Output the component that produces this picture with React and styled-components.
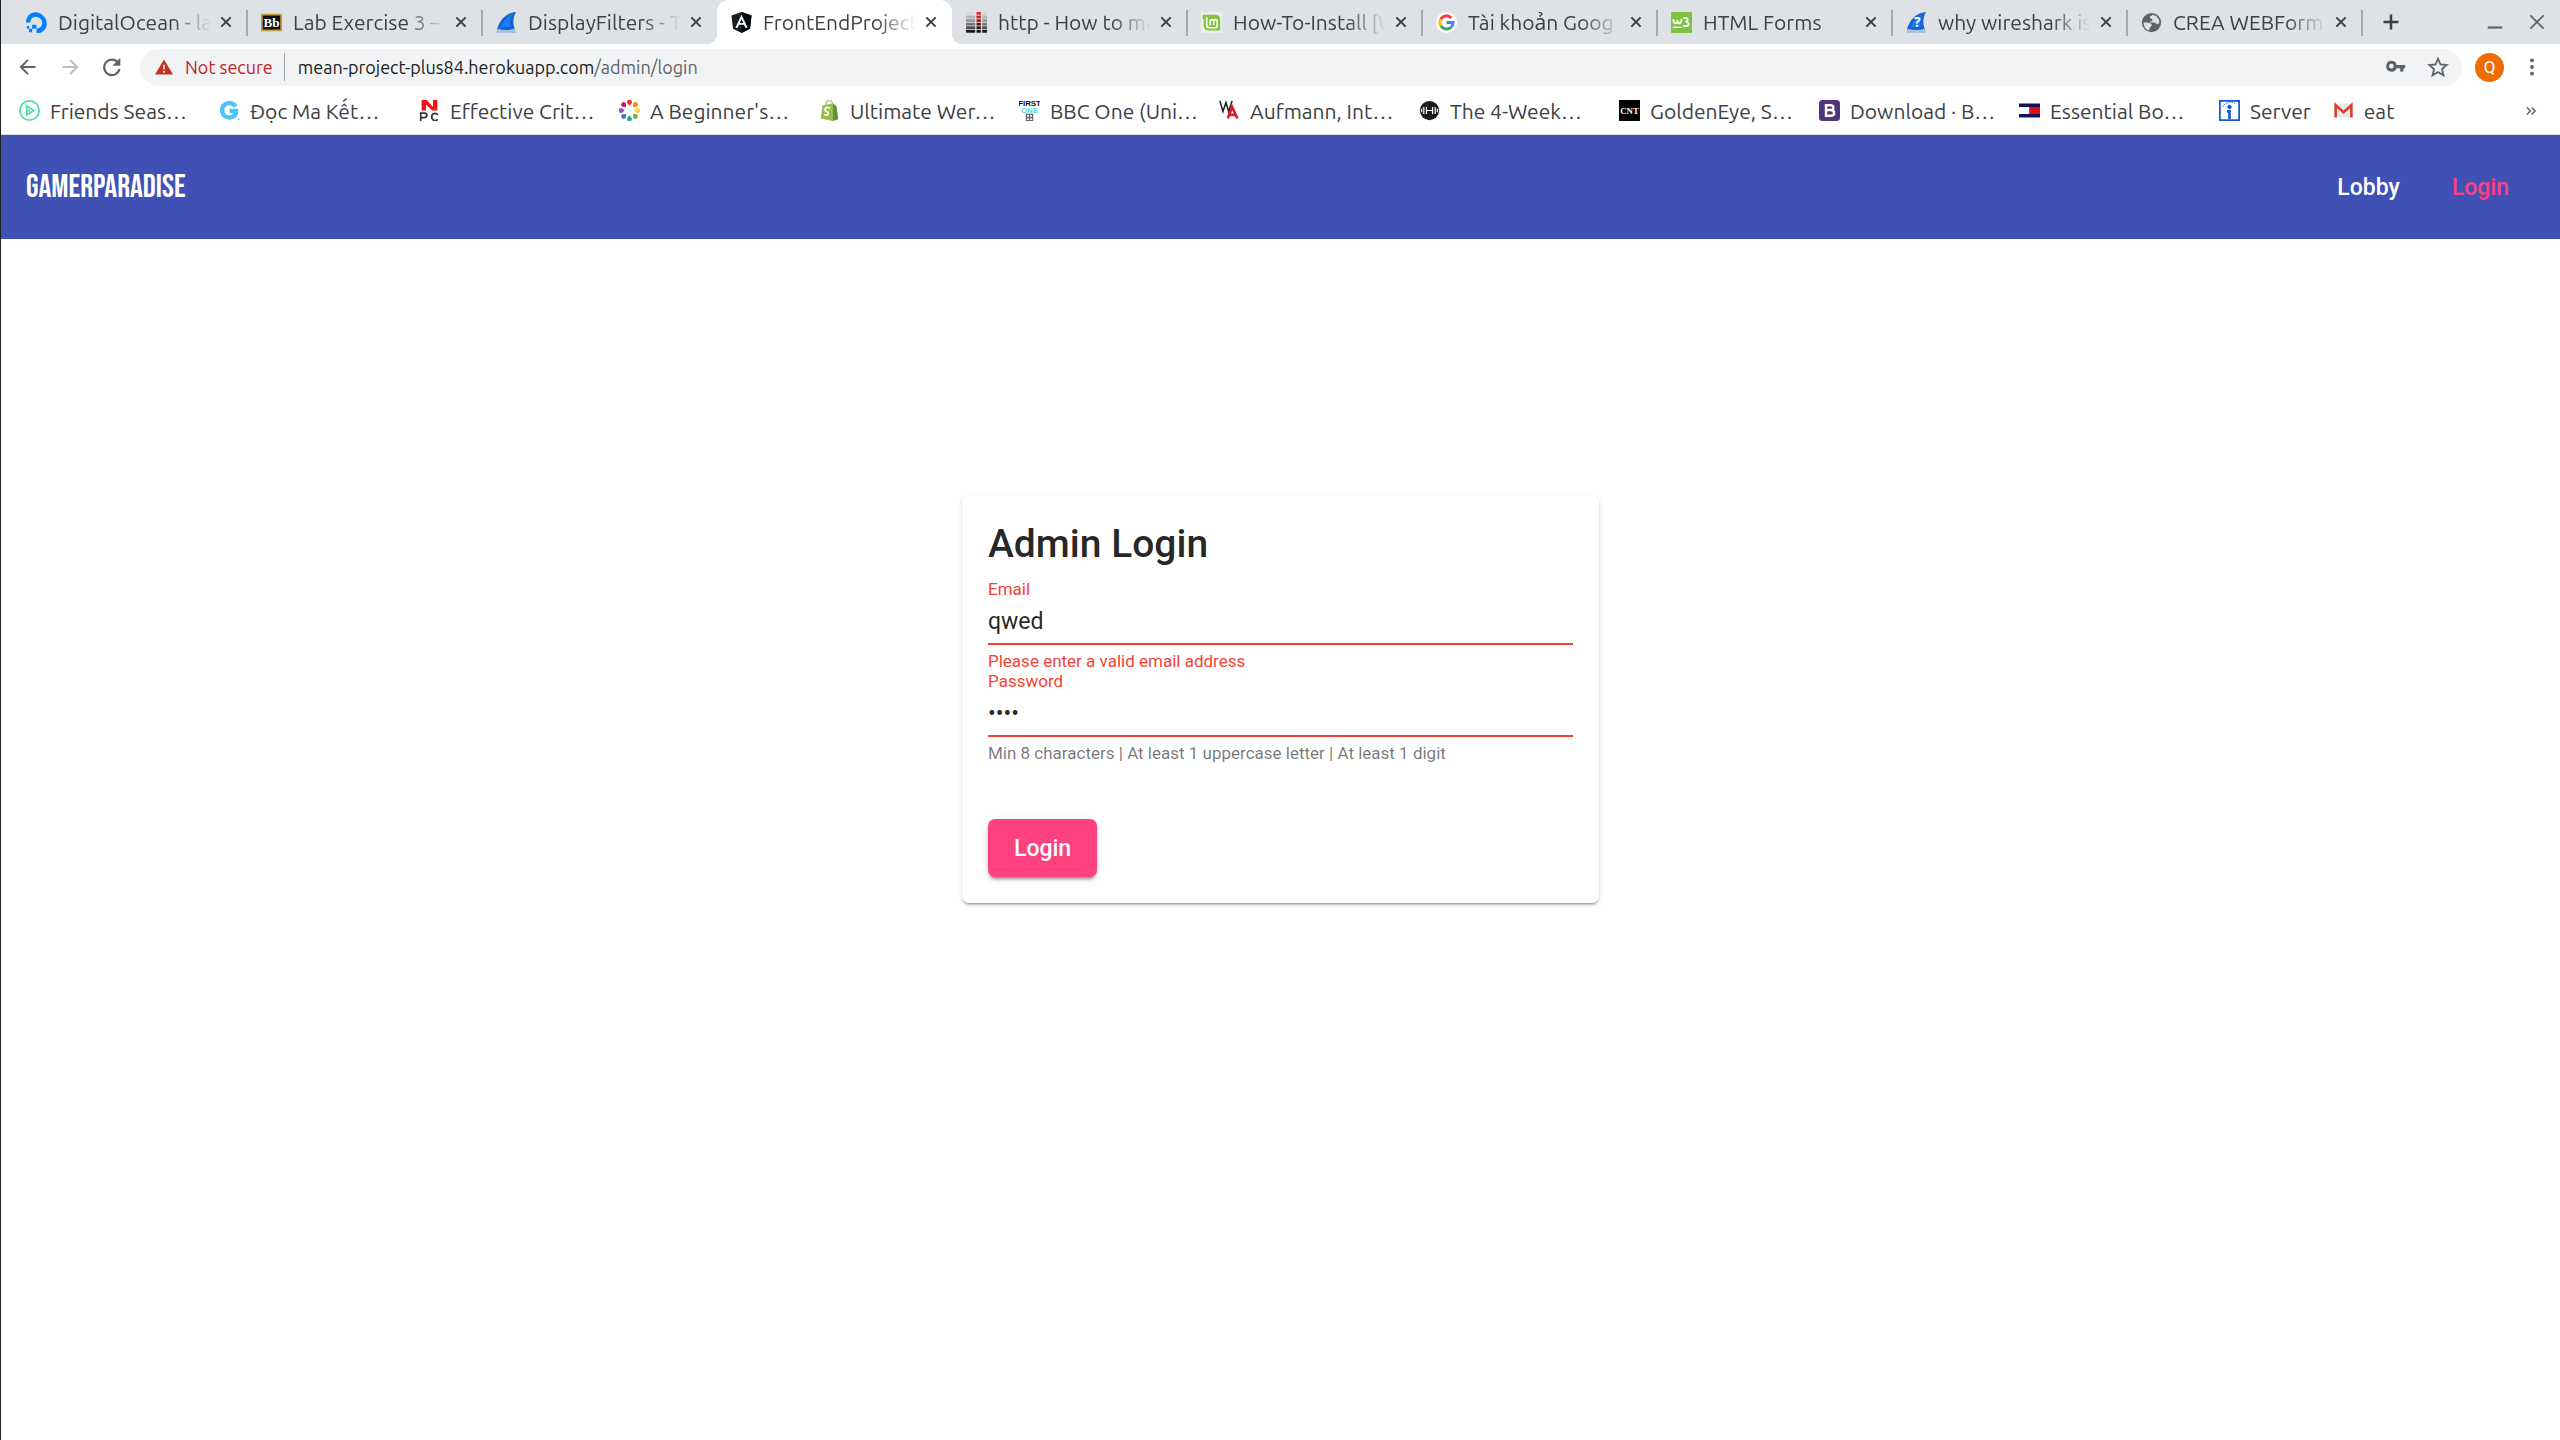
import React, { useState } from "react";
import styled, { createGlobalStyle, css } from "styled-components";

const GlobalStyle = createGlobalStyle`
  *, *::before, *::after { box-sizing: border-box; }
  body { margin: 0; background: #fff; font-family: Roboto, "Liberation Sans", sans-serif; }
  button, input { font: inherit; color: inherit; margin: 0; padding: 0; border: 0; background: none; outline: none; }
  button { cursor: pointer; }
  a { color: inherit; text-decoration: none; }
  svg { display: block; flex: none; }
`;

const Shell = styled.div`
  min-height: 100vh;
  display: flex;
  flex-direction: column;
  border-left: 1px solid #1f2022;
`;

const Chrome = styled.header`
  font-family: Ubuntu, "Noto Sans", "Open Sans", sans-serif;
  font-size: 21px;
  color: #3c4043;
  border-bottom: 1px solid #d5d7da;
`;

const TabStrip = styled.div`
  display: flex;
  height: 44px;
  padding-left: 11px;
  background: #dee1e6;
`;

const Tab = styled.div`
  position: relative;
  flex: 0 1 235px;
  min-width: 0;
  display: flex;
  align-items: center;
  gap: 11px;
  padding: 0 11px 0 14px;
  ${(p) => p.$divided && css`
    &::after {
      content: "";
      position: absolute;
      right: -1px;
      top: 10px;
      width: 2px;
      height: 26px;
      background: #a5a8ad;
    }
  `}
  ${(p) => p.$active && css`
    background: #fff;
    border-radius: 12px 12px 0 0;
    &::before, &::after {
      content: "";
      position: absolute;
      bottom: 0;
      width: 10px;
      height: 10px;
    }
    &::before { right: 100%; background: radial-gradient(circle at 0 0, transparent 10px, #fff 10px); }
    &::after { left: 100%; background: radial-gradient(circle at 100% 0, transparent 10px, #fff 10px); }
  `}
`;

const TabTitle = styled.button`
  flex: 1;
  min-width: 0;
  overflow: hidden;
  white-space: nowrap;
  text-align: left;
  line-height: 28px;
  mask-image: linear-gradient(to right, #000 calc(100% - 40px), transparent);
`;

const IconButton = styled.button`
  flex: none;
  display: grid;
  place-items: center;
  width: ${(p) => p.$size || 42}px;
  height: ${(p) => p.$size || 42}px;
  color: ${(p) => p.$color || "#5f6368"};
`;

const TabClose = styled(IconButton)`
  width: 20px;
  height: 20px;
  margin-left: -6px;
  color: #3c4043;
`;

const StripTools = styled.div`
  flex: 1;
  display: flex;
  align-items: center;
  padding: 0 2px 0 8px;
`;

const Spacer = styled.span`
  flex: 1;
`;

const Toolbar = styled.div`
  display: flex;
  align-items: center;
  height: 46px;
  padding: 0 7px 0 6px;
`;

const Omnibox = styled.div`
  flex: 1;
  display: flex;
  align-items: center;
  height: 37px;
  margin-left: 7px;
  padding: 0 3px 0 15px;
  border-radius: 19px;
  background: #f1f3f4;
  font-size: 18px;
`;

const SecurityChip = styled.button`
  display: flex;
  align-items: center;
  gap: 12px;
  color: #c5221f;
`;

const Divider = styled.span`
  width: 1px;
  height: 28px;
  margin: 0 13px 0 11px;
  background: #9a9da1;
`;

const Host = styled.label`
  color: #202124;
`;

const PathInput = styled.input`
  flex: 1;
  min-width: 0;
  color: #5f6368;
`;

const Avatar = styled.button`
  width: 29px;
  height: 29px;
  margin: 0 7px 0 13px;
  border-radius: 50%;
  background: #ef6c00;
  color: #fff;
  font-family: Roboto, sans-serif;
  font-size: 17px;
  line-height: 29px;
`;

const BookmarkBar = styled.nav`
  display: flex;
  align-items: center;
  height: 44px;
  padding: 0 8px 3px 18px;
`;

const Bookmark = styled.a`
  flex: 0 1 ${(p) => (p.$short ? "auto" : "200px")};
  min-width: 0;
  display: flex;
  align-items: center;
  gap: 10px;
  padding-right: ${(p) => (p.$short ? 22 : 0)}px;
  line-height: 28px;
  white-space: nowrap;
`;

const AppBar = styled.div`
  display: flex;
  align-items: center;
  justify-content: space-between;
  height: 104px;
  padding: 0 51px 0 25px;
  background: #3f51b5;
  color: #fff;
`;

const Brand = styled.a`
  font-family: "Bebas Neue", "Roboto Condensed", "Liberation Sans Narrow", "Liberation Sans", sans-serif;
  font-size: 32px;
  font-weight: 400;
`;

const AppNav = styled.nav`
  display: flex;
  gap: 52px;
  font-size: 23px;
  font-weight: 500;
`;

const NavLink = styled.a`
  color: ${(p) => (p.$active ? "#ff4081" : "#fff")};
`;

const Main = styled.main`
  flex: 1;
  padding: 256px 26px 26px;
`;

const Card = styled.form`
  max-width: 637px;
  margin: 0 auto;
  padding: 26px;
  border-radius: 7px;
  background: #fff;
  color: rgba(0, 0, 0, 0.87);
  box-shadow: 0 3px 2px -2px rgba(0, 0, 0, 0.2), 0 2px 2px 0 rgba(0, 0, 0, 0.14), 0 2px 5px 0 rgba(0, 0, 0, 0.12);
`;

const CardTitle = styled.h1`
  margin: 0 0 12px;
  font-size: 39px;
  line-height: 46px;
  font-weight: 500;
`;

const Field = styled.div`
  display: flex;
  flex-direction: column;
  font-size: 17px;
  line-height: 20px;
`;

const FieldLabel = styled.label`
  color: #f44336;
`;

const FieldInput = styled.input`
  height: 46px;
  padding: 8px 0;
  border-bottom: 2px solid #f44336;
  font-size: 23px;
  line-height: 28px;
`;

const FieldNote = styled.p`
  margin: 6px 0 0;
  color: ${(p) => (p.$error ? "#f44336" : "rgba(0, 0, 0, 0.54)")};
`;

const SubmitButton = styled.button`
  height: 58px;
  margin-top: 56px;
  padding: 0 26px;
  border-radius: 7px;
  background: #ff4081;
  color: #fff;
  font-size: 23px;
  font-weight: 500;
  box-shadow: 0 5px 2px -3px rgba(0, 0, 0, 0.2), 0 3px 3px 0 rgba(0, 0, 0, 0.14), 0 2px 8px 0 rgba(0, 0, 0, 0.12);
`;

const Icon = ({ size = 21, box = 24, children, ...rest }) => (
  <svg width={size} height={size} viewBox={`0 0 ${box} ${box}`} fill="none" aria-hidden="true" {...rest}>
    {children}
  </svg>
);

const Stroke = ({ d, size = 24, width = 2 }) => (
  <Icon size={size} stroke="currentColor" strokeWidth={width}>
    <path d={d} />
  </Icon>
);

const Fin = ({ mark }) => (
  <Icon>
    <path d="M1 21C3 11 10 1 23 0c-4 6-4 14-1 21z" fill="#1262d8" />
    <path d="M6 17C8 10 13 4 20 2c-4 5-5 10-3 15z" fill="#1b7bea" />
    <path d="M0 24l2-5c7 2 13 2 19 0l2 5z" fill="#a9bfdc" />
    {mark && <text x="13" y="17" fontSize="16" fontWeight="700" textAnchor="middle" fill="#fff" fontFamily="Open Sans">?</text>}
  </Icon>
);

const OceanIcon = () => (
  <Icon>
    <path d="M12 24v-5c5 0 8-5 6-9-2-5-9-6-12-2-1 1-1 3-1 4H0C0 4 7-2 15 1c10 4 12 17 3 22-2 1-4 1-6 1z" fill="#0080ff" />
    <path d="M7 14.500h5V19H7zM3.500 19H7v4H3.500zM1 16h2.500v3H1z" fill="#0080ff" />
  </Icon>
);

const BlackboardIcon = () => (
  <Icon>
    <rect x="1" y="3" width="22" height="18" fill="#111" stroke="#c29b3c" strokeWidth="2" />
    <text x="12" y="17.500" fontSize="15" fontWeight="700" textAnchor="middle" fill="#fff" fontFamily="Liberation Serif, serif">Bb</text>
  </Icon>
);

const AngularIcon = () => (
  <Icon>
    <path d="M12 0l11.500 4-1.800 15L12 24 2.300 19 .5 4z" fill="#1b1f24" />
    <path d="M12 0l11.500 4-1.800 15L12 24z" fill="#05080b" />
    <path d="M12 3L5 18h2.700l1.400-3.500h5.800l1.400 3.500H19zm0 5l2 4.500h-4z" fill="#fff" />
  </Icon>
);

const BARS = ["#d9d9d9", "#b5b5b5", "#999", "#777", "#4a4a4a", "#1b1b1b"];
const REDS = ["#f3282c", "#c91f25", "#a51b20", "#6f1318", "#3c1013", "#1b1b1b"];
const ExchangeIcon = () => (
  <Icon>
    {BARS.map((c, i) => (
      <g key={c}>
        <rect x="0" y={i * 4.1} width="10.500" height="3.200" fill={c} />
        <rect x="12" y={i * 4.1} width="5" height="3.200" fill={REDS[i]} />
        <rect x="18.500" y={i * 4.1} width="5.500" height="3.200" fill={c} />
      </g>
    ))}
  </Icon>
);

const MintIcon = () => (
  <Icon>
    <rect width="24" height="24" fill="#eee" />
    <path d="M2 3h14c4 0 6 2 6 6v12H9c-4 0-6-2-6-6V8H2z" fill="#86c440" />
    <path d="M6.500 6v8c0 3 1 4 3 4h6c2 0 3-1 3-3v-4c0-3-4-3-4 0v4m0-4c0-3-4-3-4 0v4" stroke="#fff" strokeWidth="1.800" />
  </Icon>
);

const GoogleIcon = () => (
  <Icon>
    <circle cx="12" cy="12" r="12" fill="#fff" />
    <g strokeWidth="3.400">
      <path d="M17.500 6.800A7.500 7.500 0 0 0 5.500 8.200" stroke="#ea4335" />
      <path d="M5.500 8.200a7.500 7.500 0 0 0 0 7.600" stroke="#fbbc05" />
      <path d="M5.500 15.800a7.500 7.500 0 0 0 11.500 1.800" stroke="#34a853" />
      <path d="M12 12h7.500a7.500 7.500 0 0 1-2.500 5.600" stroke="#4285f4" />
    </g>
  </Icon>
);

const SchoolsIcon = () => (
  <Icon>
    <rect width="24" height="24" rx="1" fill="#80c342" />
    <path d="M3 8c-1 6 4 7 4.500 1C7 15 12 14 12 8M14 7.500c5-3 7.500 2.500 2.500 3.500 6 .5 4.500 7-2.500 4.500" stroke="#fff" strokeWidth="2" />
    <path d="M2 17.500h11" stroke="#fff" strokeWidth="1.500" />
  </Icon>
);

const GlobeIcon = () => (
  <Icon>
    <circle cx="12" cy="12" r="11" fill="#5f6368" />
    <path d="M13 3c-1 2-3 1-3 3s3 1 3 3-3 1-3 3h5c2 0 2 2 4 2l2-2c0-5-3-8-8-9z" fill="#dee1e6" />
    <path d="M3 12c3 0 8 0 9 2s-1 3-2 4l-1 3c-4-1-6-5-6-9z" fill="#dee1e6" />
  </Icon>
);

const PlayRing = () => (
  <Icon stroke="#4de2a2" strokeWidth="2">
    <circle cx="12" cy="12" r="11" />
    <path d="M9 7l8 5-8 5z" />
    <path d="M11.500 10.500v3" />
  </Icon>
);

const BlueG = () => (
  <Icon>
    <path d="M19 7.500A8.300 8.300 0 1 0 19.500 15v-2.500H12" stroke="#4fc3f7" strokeWidth="5" />
    <circle cx="22.500" cy="22" r="1" fill="#4fc3f7" />
  </Icon>
);

const NpcIcon = () => (
  <Icon>
    <path d="M3 0h6l7 8V0h5v12h-6L8 5v7H3z" fill="#f01414" />
    <path d="M2 24V15h4c4 0 4 5 0 5H2M21.500 17c-2-3-7-2-7 2.500s5 5 7 2.500" stroke="#333" strokeWidth="2" />
  </Icon>
);

const DOTS = ["#e53935", "#fb8c00", "#fdd835", "#7cb342", "#26a69a", "#3f78c9", "#7e57c2", "#c2185b"];
const DotRing = () => (
  <Icon>
    {DOTS.map((c, i) => (
      <path key={c} d="M10 0h4l1 3-3 3.500L9 3z" fill={c} transform={`rotate(${i * 45} 12 12)`} />
    ))}
  </Icon>
);

const ShopifyIcon = () => (
  <Icon>
    <path d="M8 6c0-7 7-8 8 0" stroke="#b9c7a5" strokeWidth="2" />
    <path d="M4 6l12-2v20L2 21z" fill="#95bf47" />
    <path d="M16 4l4 3 2 15-6 2z" fill="#5e8e3e" />
    <path d="M13 9c-7-2-7 3-4 4.500s2 5-3 3" stroke="#fff" strokeWidth="2" />
  </Icon>
);

const FirstOneIcon = () => (
  <Icon>
    <g fontFamily="Liberation Sans, sans-serif" fontWeight="700" textAnchor="middle">
      <text x="12" y="7" fontSize="9" fill="#111">FIRST</text>
      <text x="12" y="14.500" fontSize="9" fill="#58dbe8">ONE</text>
    </g>
    <path d="M8.500 16.500h7v7h-7zM8.500 20h7M12 16.500v7" stroke="#666" strokeWidth="1.500" />
  </Icon>
);

const WaIcon = () => (
  <Icon>
    <path d="M1 1l3.500 12L8 3l3 10 4-12" stroke="#222" strokeWidth="1.800" />
    <path d="M10 21l5-13 6 13M12 17h7" stroke="#e01b24" strokeWidth="3" />
  </Icon>
);

const DumbbellIcon = () => (
  <Icon>
    <circle cx="12" cy="12" r="11" fill="#1b1b1b" />
    <path d="M9 12h6M8.500 8v8M15.500 8v8M5.500 8v8M18.500 8v8M3 10v4M21 10v4" stroke="#fff" strokeWidth="1.400" />
  </Icon>
);

const CntIcon = () => (
  <Icon>
    <rect width="24" height="24" fill="#000" />
    <text x="12" y="15.500" fontSize="10" fontWeight="700" textAnchor="middle" fill="#fff" fontFamily="Liberation Serif, serif">CNT</text>
  </Icon>
);

const BootstrapIcon = () => (
  <Icon>
    <rect width="24" height="24" rx="4" fill="#4f3579" />
    <path d="M8 6h5c4.500 0 4.500 5.500 0 5.500H8h5.500c5 0 5 6.500 0 6.500H8z" stroke="#fff" strokeWidth="2.800" />
  </Icon>
);

const TommyIcon = () => (
  <Icon>
    <path d="M0 4h24v16H0z" fill="#12125c" />
    <path d="M0 8h12v8H0z" fill="#fff" />
    <path d="M12 8h12v8H12z" fill="#e30b17" />
  </Icon>
);

const InfoBox = () => (
  <Icon stroke="#1558e0">
    <rect x="1" y="1" width="22" height="22" fill="#fff" strokeWidth="2" />
    <path d="M4 8c3-6 11-7 14-4" strokeWidth="1" strokeDasharray="2 1" />
    <circle cx="12" cy="8" r="2" fill="#1558e0" />
    <path d="M9 13h3v9" strokeWidth="3" />
  </Icon>
);

const GmailIcon = () => (
  <Icon>
    <path d="M2 4h20v16H2z" fill="#e9e9e9" />
    <path d="M3 20V6l9 8 9-8v14" stroke="#d93f35" strokeWidth="3" />
  </Icon>
);

const TABS = [
  { title: "DigitalOcean - la", icon: <OceanIcon /> },
  { title: "Lab Exercise 3 –", icon: <BlackboardIcon /> },
  { title: "DisplayFilters - T", icon: <Fin /> },
  { title: "FrontEndProject", icon: <AngularIcon />, active: true },
  { title: "http - How to ma", icon: <ExchangeIcon /> },
  { title: "How-To-Install [W", icon: <MintIcon /> },
  { title: "Tài khoản Goog", icon: <GoogleIcon /> },
  { title: "HTML Forms", icon: <SchoolsIcon /> },
  { title: "why wireshark is", icon: <Fin mark /> },
  { title: "CREA WEBForm", icon: <GlobeIcon /> },
];

const BOOKMARKS = [
  { title: "Friends Seas…", icon: <PlayRing /> },
  { title: "Đọc Ma Kết…", icon: <BlueG /> },
  { title: "Effective Crit…", icon: <NpcIcon /> },
  { title: "A Beginner's…", icon: <DotRing /> },
  { title: "Ultimate Wer…", icon: <ShopifyIcon /> },
  { title: "BBC One (Uni…", icon: <FirstOneIcon /> },
  { title: "Aufmann, Int…", icon: <WaIcon /> },
  { title: "The 4-Week…", icon: <DumbbellIcon /> },
  { title: "GoldenEye, S…", icon: <CntIcon /> },
  { title: "Download · B…", icon: <BootstrapIcon /> },
  { title: "Essential Bo…", icon: <TommyIcon /> },
  { title: "Server", icon: <InfoBox />, short: true },
  { title: "eat", icon: <GmailIcon />, short: true },
];

function BrowserChrome() {
  const [path, setPath] = useState("/admin/login");
  return (
    <Chrome>
      <TabStrip>
        {TABS.map((tab, i) => (
          <Tab key={tab.title} $active={tab.active} $divided={!tab.active && !TABS[i + 1]?.active}>
            {tab.icon}
            <TabTitle type="button">{tab.title}</TabTitle>
            <TabClose type="button" aria-label="Close tab">
              <Stroke d="M5 5l14 14M19 5L5 19" size={16} width={3} />
            </TabClose>
          </Tab>
        ))}
        <StripTools>
          <IconButton type="button" aria-label="New tab" $color="#3c4043">
            <Stroke d="M12 3v18M3 12h18" size={20} width={3} />
          </IconButton>
          <Spacer />
          <IconButton type="button" aria-label="Minimize">
            <Stroke d="M4 18h16" size={22} width={2.4} />
          </IconButton>
          <IconButton type="button" aria-label="Close window">
            <Stroke d="M4 4l16 16M20 4L4 20" size={20} />
          </IconButton>
        </StripTools>
      </TabStrip>
      <Toolbar>
        <IconButton type="button" aria-label="Back">
          <Stroke d="M21 12H4M12 3.500L3.500 12l8.500 8.500" size={20} width={2.4} />
        </IconButton>
        <IconButton type="button" aria-label="Forward" $color="#babcbe">
          <Stroke d="M3 12h17M12 3.500l8.500 8.500-8.500 8.500" size={20} width={2.4} />
        </IconButton>
        <IconButton type="button" aria-label="Reload">
          <Icon size={20}>
            <path d="M19.500 7A9.300 9.300 0 1 0 21 14.500" stroke="currentColor" strokeWidth="2.600" />
            <path d="M22 1v9.500h-9.500z" fill="currentColor" />
          </Icon>
        </IconButton>
        <Omnibox>
          <SecurityChip type="button">
            <Icon size={18}>
              <path d="M12 2l12 20H0z" fill="#c5301f" />
              <path d="M12 9v6M12 17v2.500" stroke="#f1f3f4" strokeWidth="2.200" />
            </Icon>
            Not secure
          </SecurityChip>
          <Divider />
          <Host htmlFor="address">mean-project-plus84.herokuapp.com</Host>
          <PathInput id="address" value={path} onChange={(e) => setPath(e.target.value)} />
          <IconButton type="button" aria-label="Saved passwords">
            <Icon size={20}>
              <path fillRule="evenodd" d="M6.500 4.500a6.500 6.500 0 1 0 6.200 9H17v4h4v-4h2v-4H12.700a6.500 6.500 0 0 0-6.200-5zm0 3.700a2.800 2.800 0 1 1 0 5.600 2.800 2.800 0 0 1 0-5.600z" fill="currentColor" />
            </Icon>
          </IconButton>
          <IconButton type="button" aria-label="Bookmark this page">
            <Stroke d="M12 3l2.700 6.200 6.800.6-5.200 4.500 1.600 6.700-5.900-3.600L6.100 21l1.600-6.700L2.500 9.800l6.800-.6z" size={22} />
          </IconButton>
        </Omnibox>
        <Avatar type="button">Q</Avatar>
        <IconButton type="button" aria-label="Menu">
          <Icon size={20}>
            <circle cx="12" cy="4" r="2.300" fill="currentColor" />
            <circle cx="12" cy="12" r="2.300" fill="currentColor" />
            <circle cx="12" cy="20" r="2.300" fill="currentColor" />
          </Icon>
        </IconButton>
      </Toolbar>
      <BookmarkBar aria-label="Bookmarks">
        {BOOKMARKS.map((b) => (
          <Bookmark key={b.title} href="#" $short={b.short}>
            {b.icon}
            {b.title}
          </Bookmark>
        ))}
        <Spacer />
        <IconButton type="button" aria-label="More bookmarks">
          <Stroke d="M5 6l6 6-6 6M13 6l6 6-6 6" size={14} width={2.6} />
        </IconButton>
      </BookmarkBar>
    </Chrome>
  );
}

function LoginCard() {
  const [email, setEmail] = useState("qwed");
  const [password, setPassword] = useState("qwed");
  return (
    <Card noValidate onSubmit={(e) => e.preventDefault()}>
      <CardTitle>Admin Login</CardTitle>
      <Field>
        <FieldLabel htmlFor="email">Email</FieldLabel>
        <FieldInput id="email" type="email" value={email} onChange={(e) => setEmail(e.target.value)} />
        <FieldNote $error>Please enter a valid email address</FieldNote>
      </Field>
      <Field>
        <FieldLabel htmlFor="password">Password</FieldLabel>
        <FieldInput id="password" type="password" value={password} onChange={(e) => setPassword(e.target.value)} />
        <FieldNote>Min 8 characters | At least 1 uppercase letter | At least 1 digit</FieldNote>
      </Field>
      <SubmitButton type="submit">Login</SubmitButton>
    </Card>
  );
}

export default function App() {
  return (
    <Shell>
      <GlobalStyle />
      <BrowserChrome />
      <AppBar>
        <Brand href="#">GAMERPARADISE</Brand>
        <AppNav>
          <NavLink href="#">Lobby</NavLink>
          <NavLink href="#" $active>Login</NavLink>
        </AppNav>
      </AppBar>
      <Main>
        <LoginCard />
      </Main>
    </Shell>
  );
}
